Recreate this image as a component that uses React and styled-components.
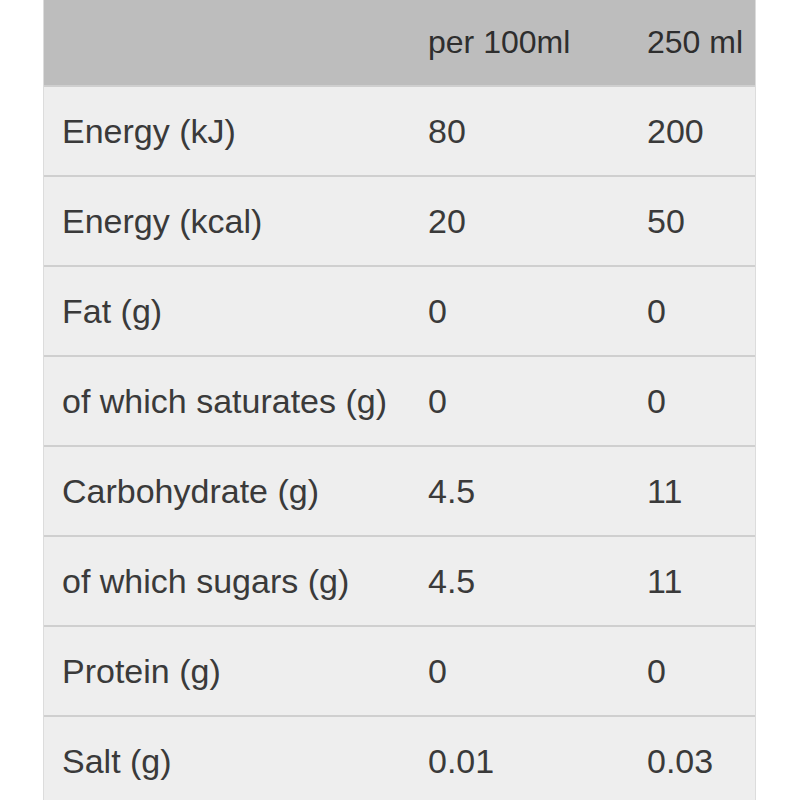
import React from "react";
import styled, { createGlobalStyle } from "styled-components";

const Global = createGlobalStyle`
  html, body { margin: 0; padding: 0; background: #ffffff; }
  body { font-family: "Liberation Sans", Arial, sans-serif; }
`;

const Page = styled.div`
  padding-left: 43px;
`;

const Table = styled.div`
  width: 711px;
  border-left: 1px solid #dcdcdc;
  border-right: 1px solid #dcdcdc;
  display: flex;
  flex-direction: column;
`;

const Row = styled.div`
  display: grid;
  grid-template-columns: 366px 219px 1fr;
  align-items: center;
  height: ${(p) => (p.$header ? "85px" : "88px")};
  background: ${(p) => (p.$header ? "#bdbdbd" : "#eeeeee")};
  border-bottom: 2px solid #cfcfcf;
`;

const Cell = styled.div`
  padding-left: 18px;
  font-size: ${(p) => (p.$header ? "32px" : "34px")};
  color: ${(p) => (p.$header ? "#2e2e2e" : "#3a3a3a")};
  white-space: nowrap;
`;

const rows = [
  ["Energy (kJ)", "80", "200"],
  ["Energy (kcal)", "20", "50"],
  ["Fat (g)", "0", "0"],
  ["of which saturates (g)", "0", "0"],
  ["Carbohydrate (g)", "4.5", "11"],
  ["of which sugars (g)", "4.5", "11"],
  ["Protein (g)", "0", "0"],
  ["Salt (g)", "0.01", "0.03"],
];

export default function App() {
  return (
    <>
      <Global />
      <Page>
        <Table>
          <Row $header>
            <Cell $header></Cell>
            <Cell $header>per 100ml</Cell>
            <Cell $header>250 ml</Cell>
          </Row>
          {rows.map((r) => (
            <Row key={r[0]}>
              <Cell>{r[0]}</Cell>
              <Cell>{r[1]}</Cell>
              <Cell>{r[2]}</Cell>
            </Row>
          ))}
        </Table>
      </Page>
    </>
  );
}
